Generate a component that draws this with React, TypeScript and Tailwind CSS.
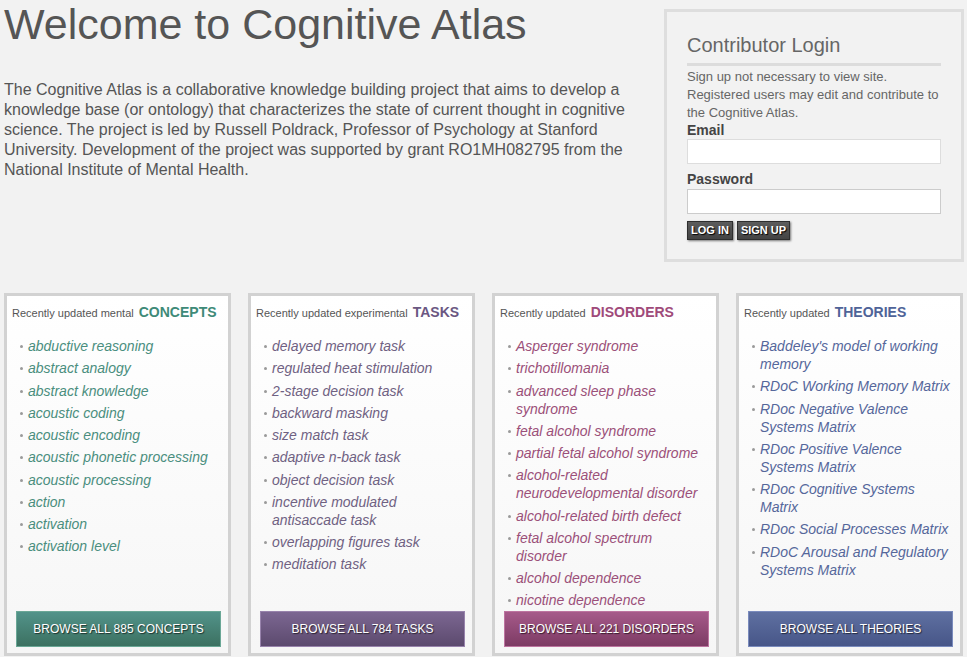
const sections = [
   {
      lead: 'Recently updated mental',
      title: 'CONCEPTS',
      head: 'text-[#3e8a78]',
      item: 'text-[#4a8e7e]',
      items: [
         'abductive reasoning',
         'abstract analogy',
         'abstract knowledge',
         'acoustic coding',
         'acoustic encoding',
         'acoustic phonetic processing',
         'acoustic processing',
         'action',
         'activation',
         'activation level',
      ],
      label: 'BROWSE ALL 885 CONCEPTS',
   },
   {
      lead: 'Recently updated experimental',
      title: 'TASKS',
      head: 'text-[#6b5782]',
      item: 'text-[#6f6182]',
      items: [
         'delayed memory task',
         'regulated heat stimulation',
         '2-stage decision task',
         'backward masking',
         'size match task',
         'adaptive n-back task',
         'object decision task',
         'incentive modulated antisaccade task',
         'overlapping figures task',
         'meditation task',
      ],
      label: 'BROWSE ALL 784 TASKS',
   },
   {
      lead: 'Recently updated',
      title: 'DISORDERS',
      head: 'text-[#9f4a7a]',
      item: 'text-[#9b5079]',
      items: [
         'Asperger syndrome',
         'trichotillomania',
         'advanced sleep phase syndrome',
         'fetal alcohol syndrome',
         'partial fetal alcohol syndrome',
         'alcohol-related neurodevelopmental disorder',
         'alcohol-related birth defect',
         'fetal alcohol spectrum disorder',
         'alcohol dependence',
         'nicotine dependence',
      ],
      label: 'BROWSE ALL 221 DISORDERS',
   },
   {
      lead: 'Recently updated',
      title: 'THEORIES',
      head: 'text-[#4f6398]',
      item: 'text-[#55679b]',
      items: [
         "Baddeley's model of working memory",
         'RDoC Working Memory Matrix',
         'RDoc Negative Valence Systems Matrix',
         'RDoc Positive Valence Systems Matrix',
         'RDoc Cognitive Systems Matrix',
         'RDoc Social Processes Matrix',
         'RDoC Arousal and Regulatory Systems Matrix',
      ],
      label: 'BROWSE ALL THEORIES',
   },
]

const buttonStyles = [
   'border-[#6aa796] bg-gradient-to-b from-[#52938a] to-[#3c7161]',
   'border-[#9883ac] bg-gradient-to-b from-[#7c6792] to-[#5c4a6e]',
   'border-[#bd74a0] bg-gradient-to-b from-[#a65a8a] to-[#7d3b64]',
   'border-[#7a8bbd] bg-gradient-to-b from-[#5f70a1] to-[#475688]',
]

const App = () => {
   return (
      <div className="min-h-screen bg-[#f2f2f2] font-['Liberation_Sans',Arial,sans-serif] text-[#555]">
         <div className="flex">
            {/* intro */}
            <div className="w-[640px] pl-[4px]">
               <h1 className="text-[43px] leading-[48px] text-[#555]">
                  Welcome to Cognitive Atlas
               </h1>
               <p className="mt-[32px] w-[630px] text-[16px] leading-[20px] text-[#555]">
                  The Cognitive Atlas is a collaborative knowledge building project that aims to
                  develop a knowledge base (or ontology) that characterizes the state of current
                  thought in cognitive science. The project is led by Russell Poldrack, Professor of
                  Psychology at Stanford University. Development of the project was supported by
                  grant RO1MH082795 from the National Institute of Mental Health.
               </p>
            </div>

            {/* login */}
            <div className="mt-[9px] mr-[3px] ml-auto h-[253px] w-[300px] border-[3px] border-[#dedede] px-[20px] pt-[21px]">
               <h2 className="text-[20px] leading-[24px] text-[#666]">Contributor Login</h2>
               <div className="mt-[6px] h-[3px] bg-[#dcdcdc]" />
               <p className="mt-[2px] text-[13px] leading-[18px] text-[#666]">
                  Sign up not necessary to view site. Registered users may edit and contribute to the
                  Cognitive Atlas.
               </p>
               <label className="block text-[14px] leading-[16px] font-bold text-[#444]">Email</label>
               <input
                  type="text"
                  className="mt-[1px] block h-[25px] w-full border border-[#ddd] bg-white"
               />
               <label className="mt-[7px] block text-[14px] leading-[16px] font-bold text-[#444]">
                  Password
               </label>
               <input
                  type="password"
                  className="mt-[2px] block h-[25px] w-full border border-[#ccc] bg-white"
               />
               <div className="mt-[7px] flex gap-[4px]">
                  <button className="h-[19px] border border-[#2e2e2e] bg-gradient-to-b from-[#5c5c5c] to-[#444] px-[3px] text-[11px] leading-[17px] font-bold text-white shadow-[1px_1px_2px_rgba(0,0,0,0.5)] [text-shadow:1px_1px_1px_#000]">
                     LOG IN
                  </button>
                  <button className="h-[19px] border border-[#2e2e2e] bg-gradient-to-b from-[#5c5c5c] to-[#444] px-[3px] text-[11px] leading-[17px] font-bold text-white shadow-[1px_1px_2px_rgba(0,0,0,0.5)] [text-shadow:1px_1px_1px_#000]">
                     SIGN UP
                  </button>
               </div>
            </div>
         </div>

         {/* cards */}
         <div className="mt-[31px] flex gap-[17px] px-[4px]">
            {sections.map((s, i) => (
               <div
                  key={s.title}
                  className="flex h-[363px] w-[227px] flex-col border-[3px] border-[#d2d2d2] bg-gradient-to-b from-white to-[#f6f6f6]"
               >
                  <div className="pt-[6px] pl-[5px] text-[11px] leading-[20px] text-[#555]">
                     {s.lead}{' '}
                     <span className={`ml-[2px] text-[14px] font-bold ${s.head}`}>{s.title}</span>
                  </div>
                  <ul className="mt-[14px] min-h-0 flex-1 pr-[8px] pl-[13px]">
                     {s.items.map((it) => (
                        <li key={it} className="mb-[4.25px] flex">
                           <span className="mt-[8px] mr-[5px] h-[3px] w-[3px] shrink-0 rounded-full bg-[#9a9a9a]" />
                           <span className={`text-[14px] leading-[18px] italic ${s.item}`}>
                              {it === 'fetal alcohol spectrum disorder' ? (
                                 <>
                                    fetal alcohol spectrum
                                    <br />
                                    disorder
                                 </>
                              ) : (
                                 it
                              )}
                           </span>
                        </li>
                     ))}
                  </ul>
                  <div className="mb-[6px] shrink-0 pl-[9px]">
                     <div
                        className={`flex h-[36px] w-[205px] items-center justify-center border text-[12px] text-white [text-shadow:1px_1px_1px_rgba(0,0,0,0.6)] ${buttonStyles[i]}`}
                     >
                        {s.label}
                     </div>
                  </div>
               </div>
            ))}
         </div>
      </div>
   )
}

export default App
